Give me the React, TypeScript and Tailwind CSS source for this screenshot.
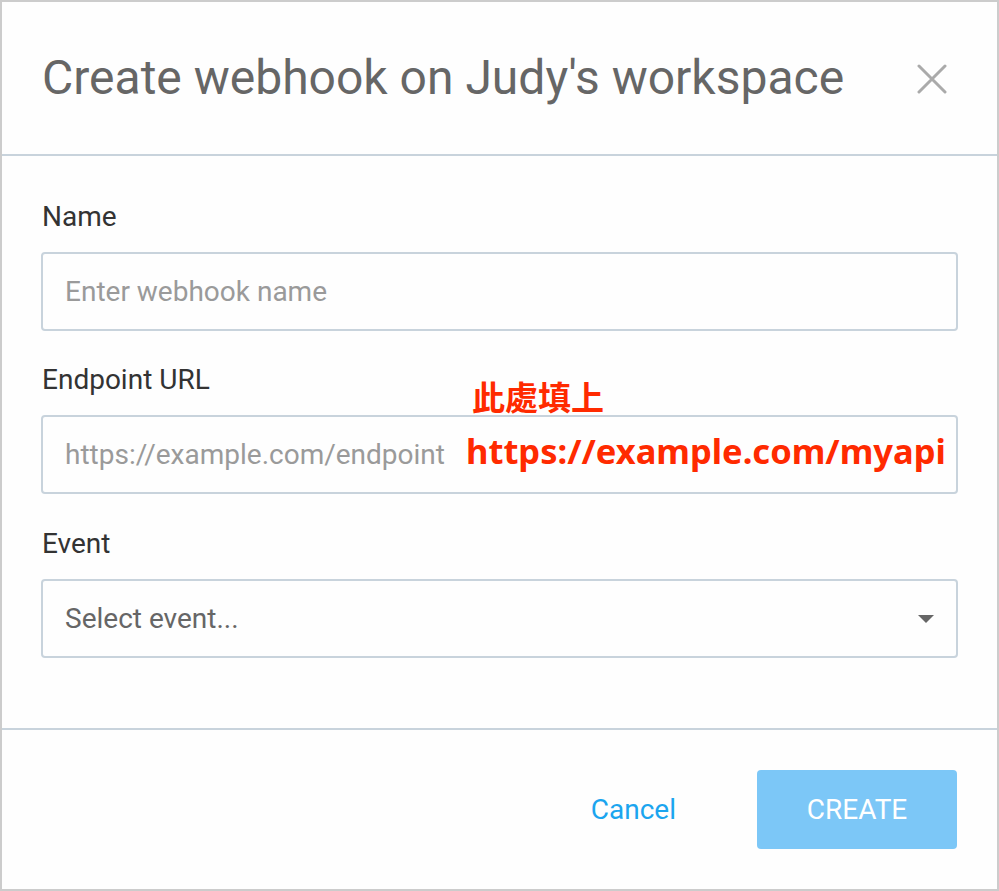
import React from "react";

export default function App() {
  return (
    <div className="w-[999px] h-[891px] bg-white" style={{ fontFamily: "Roboto, 'Noto Sans', sans-serif" }}>
      <div className="w-full h-full border-2 border-[#cccccc] flex flex-col bg-[#fefefe]">
        {/* Header */}
        <div className="h-[154px] shrink-0 border-b-2 border-[#c8d3dc] flex items-center justify-between pl-[40px] pr-[50px]">
          <h1 className="text-[48px] leading-none text-[#666666] font-normal">
            Create webhook on Judy's workspace
          </h1>
          <svg width="30" height="30" viewBox="0 0 30 30" className="mt-[2px]">
            <path d="M2 2 L28 28 M28 2 L2 28" stroke="#aaaaaa" strokeWidth="3" strokeLinecap="round" />
          </svg>
        </div>

        {/* Body */}
        <div className="flex-1 flex flex-col px-[39px] pt-[45px]">
          <label className="text-[28px] leading-[32px] text-[#333333] ml-[1px]">Name</label>
          <div className="mt-[19px] h-[79px] rounded-[4px] border-2 border-[#c8d3dc] flex items-center pl-[22px]">
            <span className="text-[28px] text-[#9a9a9a]">Enter webhook name</span>
          </div>

          <label className="mt-[33px] text-[28px] leading-[32px] text-[#333333] ml-[1px]">Endpoint URL</label>
          <div className="relative mt-[19px] h-[79px] rounded-[4px] border-2 border-[#c8d3dc] flex items-center pl-[22px]">
            <span className="text-[28px] text-[#9a9a9a]">https://example.com/endpoint</span>
            <span
              className="absolute left-[423px] top-[17px] text-[34.5px] leading-none font-bold text-[#ff2a00]"
              style={{ fontFamily: "'Noto Sans', 'Noto Sans CJK TC', sans-serif" }}
            >
              https://example.com/myapi
            </span>
            <span
              className="absolute left-[429px] top-[-37px] text-[33px] leading-none font-bold text-[#ff2a00]"
              style={{ fontFamily: "'Noto Sans CJK TC', sans-serif" }}
            >
              此處填上
            </span>
          </div>

          <label className="mt-[34px] text-[28px] leading-[32px] text-[#333333] ml-[1px]">Event</label>
          <div className="mt-[19px] h-[79px] rounded-[4px] border-2 border-[#c8d3dc] flex items-center justify-between pl-[22px] pr-[22px]">
            <span className="text-[28px] text-[#666666]">Select event...</span>
            <svg width="16" height="8" viewBox="0 0 16 8">
              <path d="M0 0 L16 0 L8 8 Z" fill="#666666" />
            </svg>
          </div>
        </div>

        {/* Footer */}
        <div className="h-[161px] shrink-0 border-t-2 border-[#c8d3dc] flex items-center justify-end pr-[40px]">
          <span className="text-[28px] text-[#1ba5ef] mr-[81px]">Cancel</span>
          <div className="w-[200px] h-[79px] rounded-[4px] bg-[#7cc7f7] flex items-center justify-center">
            <span className="text-[28px] text-white">CREATE</span>
          </div>
        </div>
      </div>
    </div>
  );
}
